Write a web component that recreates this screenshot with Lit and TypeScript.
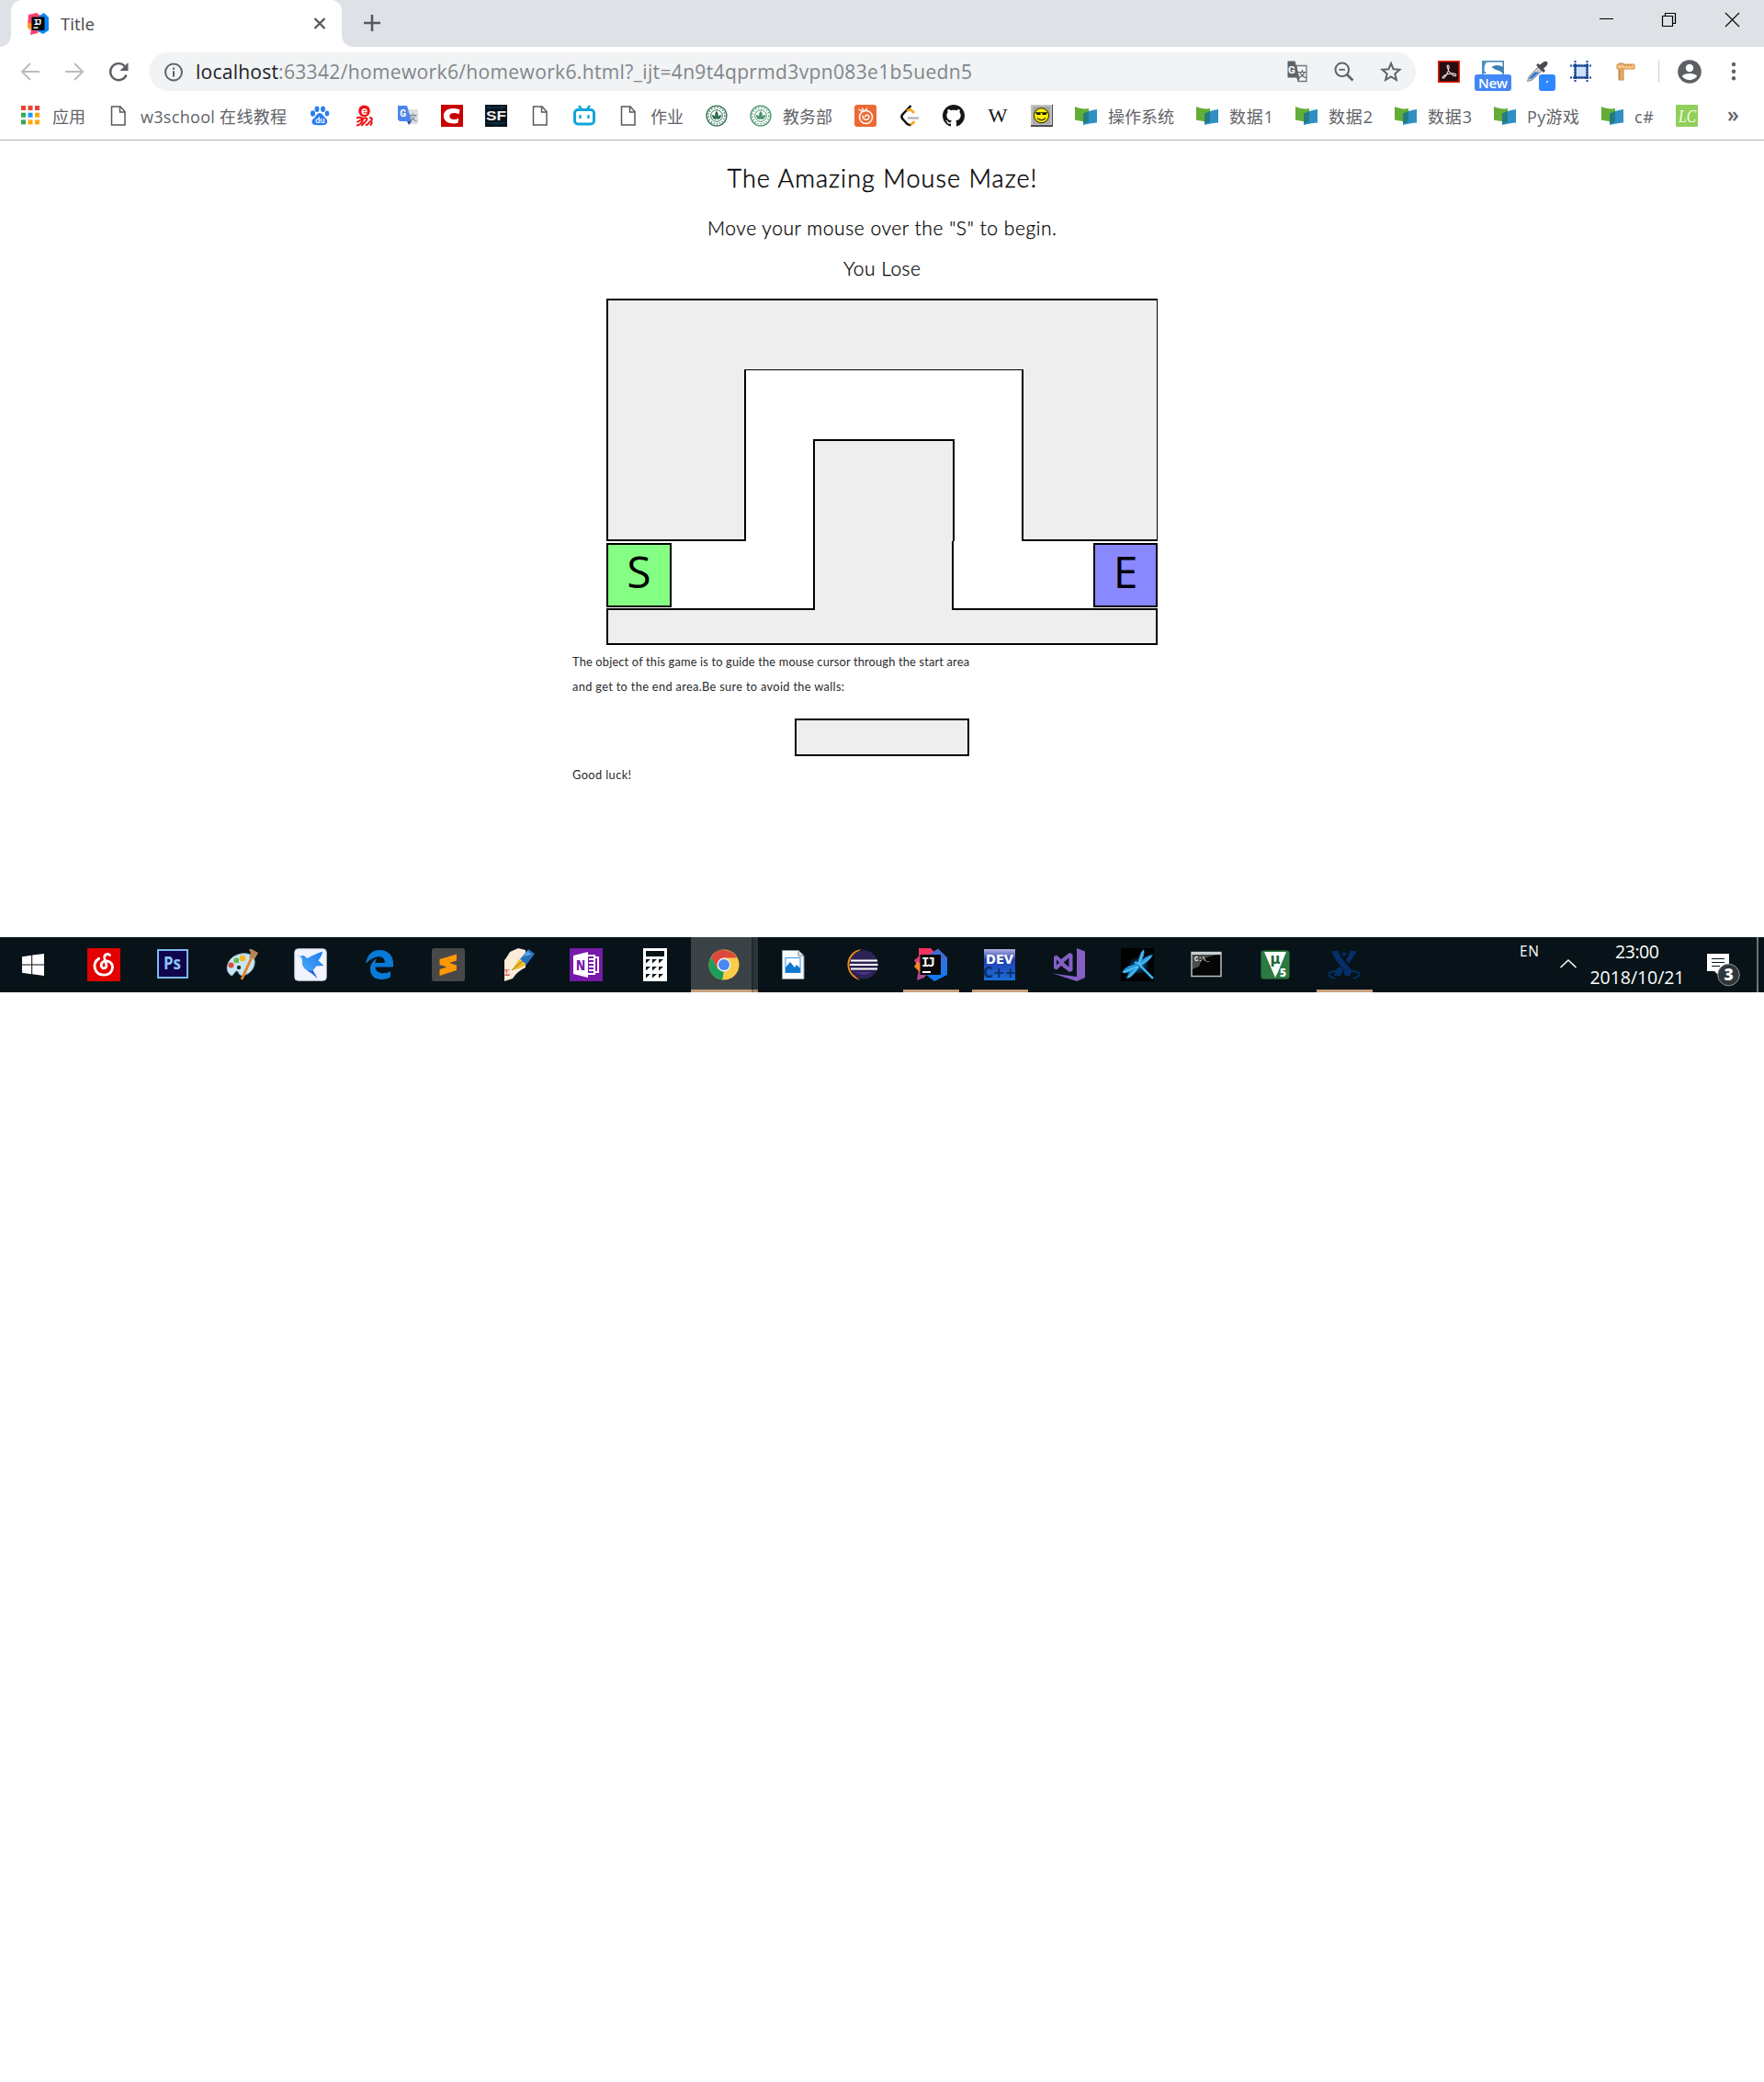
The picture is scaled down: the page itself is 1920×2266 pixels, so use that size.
import { LitElement, html, css, svg } from "lit";
import { customElement, property } from "lit/decorators.js";

/** A single line of text whose tracking is adjusted so it fills a given width. */
@customElement("fit-text")
class FitText extends LitElement {
  static styles = css`
    :host { display: block; white-space: pre; flex: none; }
    .run { display: inline-block; }
  `;
  @property({ type: Number }) w = 0;
  @property() text = "";
  firstUpdated() {
    const run = this.renderRoot.querySelector(".run") as HTMLElement;
    const natural = run.getBoundingClientRect().width;
    const n = Array.from(this.text).length;
    if (n > 1) run.style.letterSpacing = (this.w - natural) / (n - 1) + "px";
    this.style.width = this.w + "px";
  }
  render() { return html`<span class="run">${this.text}</span>`; }
}

const fit = (text: string, w: number, cls = "") => html`<fit-text class=${cls} .text=${text} .w=${w}></fit-text>`;
const ic = (size: number, body: unknown, cls = "") =>
  html`<svg class="ic ${cls}" width=${size} height=${size} viewBox="0 0 ${size} ${size}">${body}</svg>`;

/* ---------- 24px icons ---------- */
const ij24 = svg`
  <path d="M1 2 10 0l6 5-5 17-8 2 1-8-4-4z" fill="#f9426a"/><path d="M0 10l5 2-2 7-3-3z" fill="#fc9a22"/>
  <path d="M13 3l5-3 5 5v14l-6 4-6-3z" fill="#0a86fb"/>
  <rect x="4.500" y="4.500" width="14" height="14.500" fill="#070707"/>
  <text x="6.500" y="12.500" font-family="Liberation Mono" font-weight="700" font-size="9.500" textLength="9" fill="#fff">IJ</text><path d="M6.500 15.500h5v1.500h-5z" fill="#fff"/>`;
const closeX = svg`<path d="M6.500 6l11 11m0-11-11 11" stroke="#55585c" stroke-width="2.300"/>`;
const plus = svg`<path d="M12 3v18M3 12h18" stroke="#55595e" stroke-width="2.500"/>`;
const back = svg`<path d="M22 12H3.500M12 3l-9 9 9 9" fill="none" stroke="#bbbcbe" stroke-width="2"/>`;
const fwd = svg`<path d="M2 12h18.500M12 3l9 9-9 9" fill="none" stroke="#bbbcbe" stroke-width="2"/>`;
const reload = svg`<path d="M20.500 15.500A9 9 0 1 1 18.700 6" fill="none" stroke="#5b5e63" stroke-width="2.400"/><path d="M22.500 2v9h-9z" fill="#5b5e63"/>`;
const info = svg`<circle cx="12" cy="12.500" r="9" fill="none" stroke="#5f6368" stroke-width="2"/><path d="M12 11.300V17.500M12 7.500v2.200" stroke="#5f6368" stroke-width="2"/>`;
const gtr = svg`
  <path d="M11 5.500h11v17h-9z" fill="#f4f5f6" stroke="#75787c" stroke-width="1.300"/>
  <path d="M1.500.5h8l5 18H1.500z" fill="#5f6367"/>
  <text x="2" y="13.700" font-family="Roboto" font-weight="700" font-size="11.500" fill="#fff">G</text>
  <text x="12.500" y="18" font-family="Noto Sans CJK SC" font-size="9.500" font-weight="700" fill="#5f6367">文</text><path d="M11 18.500h4l-2 4z" fill="#5f6367"/>`;
const zoomOut = svg`<circle cx="9.800" cy="9.800" r="7.300" fill="none" stroke="#5f6368" stroke-width="2"/><path d="M15 15l6.500 6.500" stroke="#5f6368" stroke-width="2.600"/><path d="M6.500 9.800h6.500" stroke="#5f6368" stroke-width="1.800"/>`;
const star = svg`<path d="M12 3l2.600 6.200 6.900.6-5.200 4.500 1.600 6.700L12 17.400 6.100 21l1.600-6.700-5.200-4.500 6.900-.6z" fill="none" stroke="#5f6368" stroke-width="2"/>`;
const acrobat = svg`<rect x=".7" y=".7" width="22.600" height="22.600" fill="#250d10" stroke="#f42306" stroke-width="1.500"/>
  <path d="M10.800 5c2.300 0 1 5 0 7.500-1.200 3-3.800 7-5.300 6.500-2-1 3-4.500 8.500-5 5-.4 6.500 1 5.500 2.300-1.300 1.300-5-1.300-7-4.300C10.500 8.500 9.300 5 10.800 5z" fill="none" stroke="#e6d9d7" stroke-width="1.200"/>`;
const shot = svg`<rect x=".8" y=".8" width="22.400" height="16" fill="#fff" stroke="#478abb" stroke-width="1.600"/><path d="M0 0h7Q2 3 2.500 11L5 14H0z" fill="#4b91c3"/><path d="M10.500 7c4.500-3 9-2 12.500 0v7c-4-4-8-3-12.500-7z" fill="#3f80b1"/>`;
const dropper = svg`<path d="M1.500 22.500l1.500-5L13 7l4 4L7 21z" fill="#c9cccd" stroke="#8b8e90"/><path d="M3.500 20.500l1-3 5-5h5l-8 7z" fill="#3279dc"/><path d="M11 5l8 8 2-2-2-2.500Q24 5 23.500 2 21-1 17 3l-2 1.500-2-1.500z" fill="#4a4c4f"/>`;
const frame = svg`<rect x="6" y="6" width="12" height="12" fill="#cbe0fb"/><path d="M4 5.500h16M4 18.500h16M5.500 4v16M18.500 4v16" stroke="#174594" stroke-width="2"/><path d="M0 5.500h24M0 18.500h24M5.500 0v24M18.500 0v24" stroke="#174594" stroke-width="2" stroke-dasharray="2 1"/>`;
const ruler = svg`<path d="M5 3h5v18H5z" fill="#e9ae68" stroke="#c98441"/><path d="M3 4h19v5H3z" fill="#f4c286" stroke="#d2904c"/><path d="M12 4v2m3-2v2m3-2v2M5 12h2m-2 3h2m-2 3h2" stroke="#a76b2c"/>`;
const person = svg`<circle cx="13" cy="13" r="12.800" fill="#5c6065"/><circle cx="13" cy="9" r="4.200" fill="#fff"/><path d="M4.800 18c2-4 14.400-4 16.400 0-4 5.500-12.400 5.500-16.400 0z" fill="#fff"/>`;
const dots = svg`<circle cx="11" cy="4" r="2.200" fill="#5f6368"/><circle cx="11" cy="11.700" r="2.200" fill="#5f6368"/><circle cx="11" cy="19.300" r="2.200" fill="#5f6368"/>`;

const apps = svg`${["#ea4335", "#ea4335", "#ea4335", "#34a853", "#1a9bfc", "#fbaa05", "#34a853", "#fbaa05", "#fbaa05"].map(
  (c, i) => svg`<rect x=${2 + (i % 3) * 7.500} y=${1 + Math.floor(i / 3) * 7.700} width="5" height="5" fill=${c}/>`)}`;
const page = svg`<path d="M4.500 2h9.500l5 5.500v14.500H4.500zM13.500 2v6H19" fill="#fff" stroke="#58595b" stroke-width="1.500"/>`;
const baidu = svg`<g fill="#2b7cf0"><ellipse cx="4.500" cy="9.500" rx="2.500" ry="3.200"/><ellipse cx="9" cy="4.800" rx="2.400" ry="3.200"/><ellipse cx="15.500" cy="4.800" rx="2.400" ry="3.200"/><ellipse cx="20" cy="9.500" rx="2.300" ry="3"/><path d="M12 9c3 0 4 4 6.500 5.500 3 2.500 2 7.500-2 7.500-3 .4-6 .3-9 0C3 22 2 17 6 14.500 8 13 9 9 12 9z"/></g>
  <text x="7.300" y="20.300" font-family="Lato" font-weight="700" font-size="9" fill="#fff">du</text>`;
const erke = svg`<circle cx="12.500" cy="6.800" r="6.300" fill="#ee1111"/><text x="9.200" y="10.800" font-family="Lato" font-weight="900" font-size="12.500" fill="#fff">e</text>
  <path d="M4 14.500c3-1 6-1 6 .5s-2 2-5.500 4M4 22.500c4 0 6-3 7.500-7.500 3-1.500 5 0 3 2.500s-4 3-5 5.500M14 22.500c2-1 4-2 4-4M18 14c3 0 4 2 1.500 4 2 1 1 3-.5 4.500" fill="none" stroke="#ee1111" stroke-width="2"/>`;
const gt = svg`<path d="M11 5h12v16H13z" fill="#dcdee1"/><path d="M1 1h10l5 17H3l-2-2z" fill="#4b87ef"/><path d="M11 18h5l-3 4z" fill="#2850a7"/>
  <text x="3.300" y="13" font-family="Roboto" font-weight="700" font-size="10" fill="#fff">G</text><text x="13" y="17" font-family="Noto Sans CJK SC" font-size="9" fill="#60778a">文</text>`;
const cIcon = svg`<rect width="24" height="24" fill="#c90000"/><path d="M20.500 5.500C15 3 3 3 2.800 12.300 3 21 15 21.500 18.500 19.500l.8-5C15 17 9 16.500 9.300 12.300c.4-4 5.700-4 10.300-2z" fill="#fff"/>`;
const sf = svg`<rect width="24" height="24" fill="#07131c"/><path d="M1 3h22M2 20h20M5 1v4m7 14v4m6-22v4" stroke="#124058"/><text x="1" y="17" font-family="Liberation Sans" font-weight="700" font-size="15.500" textLength="22" lengthAdjust="spacingAndGlyphs" fill="#eee">SF</text>`;
const bili = svg`<rect x="1.500" y="5.500" width="21" height="15.500" rx="3.500" fill="none" stroke="#13a5da" stroke-width="3"/><path d="M6 1l3 4m9-4-3 4" stroke="#13a5da" stroke-width="2.500"/><path d="M7.500 11v4M16.500 11v4" stroke="#13a5da" stroke-width="2.300"/>`;
const seal = (c: string) => svg`<circle cx="12" cy="12" r="10.900" fill="#fff" stroke=${c} stroke-width="1.300"/><circle cx="12" cy="12" r="8.800" fill="none" stroke=${c} stroke-width="1.500" stroke-dasharray="1.200 2"/><circle cx="12" cy="12" r="6.300" fill="none" stroke=${c} stroke-width="1"/><path d="M12 7c2.500 2 2.500 6 0 9-2.500-3-2.500-7 0-9zM7 11q3.500 0 4.500 5-4.500 0-4.500-5zm10 0q-3.500 0-4.500 5 4.500 0 4.500-5z" fill=${c}/>`;
const onion = svg`<rect width="24" height="24" rx="3" fill="#ed6a35"/><circle cx="12.500" cy="13.500" r="7" fill="none" stroke="#fff" stroke-width="1.500"/><path d="M9 7.500 4.500 5M9.500 7 8.500 3.500M10.500 7 14 4M9 11.500c0 6 6.500 6 7 2 0-3.500-4.500-2.500-4.500 0" fill="none" stroke="#fff" stroke-width="1.400"/>`;
const leet = svg`<path d="M13.500 1 4 11q-1.500 2.500.5 4.500L9.500 21q2.500 1.500 4 .5" fill="none" stroke="#111" stroke-width="2.500"/><path d="M9 7q3-3 5.500-.5l2.500 2.500M13 22l4.500-3.800" fill="none" stroke="#ffa116" stroke-width="2.500"/><path d="M10 14.500h12" stroke="#b1b1b1" stroke-width="2.300"/>`;
const github = svg`<path transform="scale(1.500)" d="M8 0C3.580 0 0 3.580 0 8c0 3.540 2.290 6.530 5.470 7.590.4.070.55-.17.55-.38 0-.19-.01-.82-.01-1.490-2.010.37-2.530-.49-2.690-.94-.09-.23-.48-.94-.82-1.130-.28-.15-.68-.52-.01-.53.63-.01 1.080.58 1.230.82.72 1.210 1.870.87 2.330.66.07-.52.28-.87.51-1.070-1.780-.2-3.640-.89-3.640-3.950 0-.87.31-1.590.82-2.150-.08-.2-.36-1.020.08-2.120 0 0 .67-.21 2.200.82.64-.18 1.320-.27 2-.27s1.360.09 2 .27c1.530-1.040 2.200-.82 2.200-.82.44 1.100.16 1.920.08 2.120.51.56.82 1.270.82 2.150 0 3.070-1.870 3.750-3.650 3.950.29.25.54.73.54 1.480 0 1.070-.01 1.930-.01 2.200 0 .21.15.46.55.38A8.010 8.010 0 0 0 16 8c0-4.420-3.580-8-8-8z" fill="#161616"/>`;
const wiki = svg`<text x="1.500" y="19" font-family="Liberation Serif" font-size="21" textLength="21" lengthAdjust="spacingAndGlyphs" fill="#111">W</text>`;
const smile = svg`<rect width="24" height="24" fill="#4c4c4c"/><path d="M0 0h23v22H0z" fill="#c2c2c2"/><rect x="2" y="2" width="19" height="19" fill="#a7a7a7"/><circle cx="11.500" cy="11.700" r="8" fill="#ffef00" stroke="#221f00" stroke-width="1"/><path d="M5.500 8.500h5v2.500h-4zM12.500 8.500h5l-1 2.500h-4zM4.500 8.200h14v.8h-14z" fill="#141400"/><path d="M7 14.500q4.500 4.500 9 0" fill="none" stroke="#332" stroke-width="1.300"/>`;
const folder = svg`<path d="M0 2c4 2 11 3 15 2v14H8.500C5 17.500 2.500 17 0 16.500z" fill="#63ad37"/><path d="M9 9.500 15 7v12.500l-6 1.500z" fill="#237c84"/><path d="M15 7q5-1.500 9-2v14.500q-5 .3-9 1.200l-6 1.300v-1.500l6-1.500z" fill="#3090c4"/>`;
const lc = svg`<rect width="24" height="24" rx="1" fill="#91cf5b"/><text x="3" y="19" font-family="Liberation Serif" font-style="italic" font-size="19" textLength="19" lengthAdjust="spacingAndGlyphs" fill="#f7fff1">LC</text>`;

/* ---------- 36px taskbar icons ---------- */
const win = svg`<path d="M6 9.300 16.200 7.800v9.700H6zM17.200 7.600 30 6v11.500H17.200zM6 18.500h10.200v9.700L6 26.700zM17.200 18.500H30V30l-12.800-1.700z" fill="#fff"/>`;
const netease = svg`<rect width="36" height="36" fill="#e30000"/><path d="M24.500 7.500c-3-2.500-6.500 0-5.700 3.500l2 7.500c.7 4-5.500 4.500-5.700.4-.2-5 5.500-6.200 9.200-3.900 6 4 3 14-6 14.200C7.500 29.300 4.500 16.500 12.700 11.200" fill="none" stroke="#fff" stroke-width="2.800" stroke-linecap="round"/>`;
const ps = svg`<rect x="2" y="2" width="32" height="30" fill="#10054c" stroke="#7db7f1" stroke-width="2"/><text x="8" y="23" font-family="Open Sans" font-weight="700" font-size="19" textLength="19" lengthAdjust="spacingAndGlyphs" fill="#8bc5fa">Ps</text>`;
const paint = svg`<path d="M7 30C-1 25 2 15 8 10c7-5 17-6 22-1 5 6 1 17-8 20-4 2-7 0-8-4-4-1-3 3-7 5z" fill="#c9e6f3" stroke="#86afc2"/><circle cx="6.500" cy="18.500" r="3" fill="#e24b3d"/><rect x="9.500" y="10.500" width="5.500" height="5.500" rx="1.500" fill="#66b94c"/><circle cx="19" cy="11" r="3.300" fill="#f5b524"/><circle cx="15" cy="21" r="2.200" fill="#17323d"/><path d="M29 10 18 34" stroke="#e2832c" stroke-width="3"/><path d="M26 10l6 2 4-7-7-4-3 0 2 5z" fill="#b1855b"/>`;
const bird = svg`<defs><linearGradient id="w" x1="1" x2="0" y2="1"><stop stop-color="#1f7bf0"/><stop offset="1" stop-color="#55b4fb"/></linearGradient></defs>
  <rect x=".8" y=".8" width="34.400" height="34.400" rx="3.500" fill="#f1f4fd" stroke="#d3daeb"/>
  <path d="M2.500 7.500 7.500 9Q10 6.500 12.500 9.500q1.500 2 4 .5Q22 6.500 31.500 3.500 30 9 26.500 13.500l6 5.500-8.500.5q-1.500 3.500-3.500 4.500l5 9Q20 27 14 24 7.500 20 9 13q-.5-2.500-2-3.500z" fill="url(#w)"/><path d="M14 24q4.500 1.500 6.500 0l5 9Q20 27 14 24z" fill="#2c5dd6"/>`;
const edge = svg`<path d="M3.200 16.800C4.500 6.500 11 2 18 2c10 0 15.500 7 15 15.500v3H13.500c.5 8 11 8 16.500 4.500v6.500C21 36.500 7.500 34.500 8 22c.2-5 3-8.500 7-10.500-1 1.500-1.600 3-1.700 4.500h10.500c.2-7-6-7.500-10.500-6-4 1.200-7.500 3.800-10.100 6.800z" fill="#0a7ad8"/>`;
const sublime = svg`<rect width="36" height="36" rx="2.500" fill="#484848"/><path d="M8.500 12 27 6.500v7L19 16l8 2.500v5.500L8.500 30v-7l8-2.500-8-2.500z" fill="#ff9800"/>`;
const note = svg`<path d="M4 36V13q2-2 6-9l9-4 8 2v19q-9 4-14 12z" fill="#faecd9"/><text x="4" y="30" font-family="Liberation Serif" font-weight="700" font-size="9.500" fill="#df606b">Σ</text><path d="M12 24 20 12l8 6-8 4z" fill="#eebb29"/><path d="M12 24 26 12" stroke="#9e7a1b"/><path d="M21 12 30 1l7 5-9 12z" fill="#2871bd"/><path d="M24 9l5-6 5 4" fill="#5ba2df"/>`;
const onenote = svg`<rect width="36" height="36" fill="#7719aa"/><path d="M20 8h7v20h-7" fill="#7719aa" stroke="#fff" stroke-width="2"/><path d="M28 10h3v16h-3M21 12h5m-5 4h5m-5 4h5m-5 4h5" fill="none" stroke="#fff" stroke-width="2"/><path d="M4 8 20 4v28L4 28z" fill="#fff"/><text x="7" y="24" font-family="Open Sans" font-weight="800" font-size="16" textLength="10" lengthAdjust="spacingAndGlyphs" fill="#7719aa">N</text>`;
const calc = svg`<rect x="5" width="26" height="36" fill="#fff"/><rect x="8" y="3" width="20" height="6" fill="#071318"/>${[12, 20, 28].map((y) =>
  [8, 15, 22].map((x) => svg`<path d="M${x} ${y}h5l-5 4.500z" fill="#071318"/>`))}`;
const chrome = svg`<circle cx="18" cy="18" r="16.500" fill="#fbcc47"/><path d="M3.700 9.800A16.500 16.500 0 0 1 32.300 10.500H18L10.500 21.500z" fill="#db4a3d"/><path d="M3.700 9.700 10.800 21.800 18 26l-1.800 8.400A16.500 16.500 0 0 1 3.700 9.700z" fill="#1b9e5a"/><path d="M18 25.500 25 21l-8.500 13.400z" fill="#fbcc47"/><circle cx="18" cy="18" r="7.500" fill="#f2f2f2"/><circle cx="18" cy="18" r="6" fill="#4a87ee"/>`;
const picture = svg`<path d="M6.500 2.500H24l6 6V33.500H6.500z" fill="#f9fbfc" stroke="#8a969c"/><path d="M24 2.500v6h6" fill="#dbe0e3" stroke="#8a969c"/><rect x="10" y="10.500" width="16" height="16" fill="#fff" stroke="#3a92dd"/><path d="M10 26.500V21l5-6 5 6 2-3 4 4v4.500z" fill="#0f75d0"/>`;
const eclipse = svg`<path d="M18 1C-2 3-3 31 17 35 4 29 4 8 18 1z" fill="#f18d15"/><circle cx="20" cy="18" r="15.700" fill="#2d2254"/><path d="M6 13.500h29M5 18h30.500M6 22.500h29" stroke="#fff" stroke-width="2"/><path d="M11 26h18q-9 6-18 0z" fill="#49358b"/>`;
const ij = svg`<defs><linearGradient id="p" x2="0" y2="1"><stop stop-color="#fe315d"/><stop offset="1" stop-color="#a14c9b"/></linearGradient><linearGradient id="b" x2="0" y2="1"><stop stop-color="#4f68ca"/><stop offset="1" stop-color="#087cfa"/></linearGradient></defs>
  <path d="M5 0h13l9 10-16 22-8 3 2-13-5-9 5-4z" fill="url(#p)"/><path d="M0 20l4-6 5 7-3 5z" fill="#f58529"/><path d="M16 7 26 .5 36 10v19l-14 7-9-7z" fill="url(#b)"/><rect x="6.500" y="7" width="22.500" height="22" fill="#080808"/><text x="8" y="19.500" font-family="DejaVu Sans Mono" font-weight="700" font-size="14" textLength="15" fill="#fff">IJ</text><path d="M9 25h9v2H9z" fill="#fff"/>`;
const dev = svg`<defs><linearGradient id="d" x2="0" y2="1"><stop stop-color="#aeb3df"/><stop offset=".35" stop-color="#233fb2"/><stop offset="1" stop-color="#1b70d8"/></linearGradient></defs><rect x="1" y="1" width="34" height="34" fill="url(#d)"/><text x="0" y="32" font-family="DejaVu Sans" font-weight="700" font-size="16" textLength="36" lengthAdjust="spacingAndGlyphs" fill="#073369">C++</text><text x="3" y="17" font-family="DejaVu Sans" font-weight="700" font-size="14.500" textLength="30" lengthAdjust="spacingAndGlyphs" fill="#fff">DEV</text>`;
const vs = svg`<path d="M27 0 36 3.500V32l-9 4-26-8.500L27 31zM2 9l3-1.500L10 12l9-7 3.500 1.500v18L19 26l-9-7-5 4.500L2 22zm3 3.500v6l3-3zM12.500 15.500l6 5v-10z" fill="#865fc5" fill-rule="evenodd"/>`;
const fly = svg`<defs><radialGradient id="f"><stop stop-color="#126fae"/><stop offset="1" stop-color="#000"/></radialGradient></defs><rect width="36" height="36" fill="#000"/><ellipse cx="19" cy="19" rx="12" ry="10" fill="url(#f)"/>
  <g fill="#2299dd"><path d="M18 18Q20 5 25 1q2 5-4 17zM19 18Q27 7 35 7q-3 7-14 13zM19 17Q6 18 1 26q4 4 17-5zM18 19Q8 25 6 33q5 1 14-12z"/></g>
  <path d="M15 16q4-1 7 4l13 13" fill="none" stroke="#3db4ef" stroke-width="2.500"/><path d="M24 3 20 17M33 9 21 18M3 26l15-6M8 32l11-12" stroke="#7fd2f7" stroke-width="1"/>`;
const cmd = svg`<rect x="2" y="4.500" width="32" height="26" fill="#050505" stroke="#b9c1c5" stroke-width="1.500"/><path d="M2 4h32v3H2z" fill="#c9d0d4"/><path d="M3 7h30q-20 1-23 13l-7 3z" fill="#4b4b4b"/><text x="5" y="13.500" font-family="Liberation Mono" font-weight="700" font-size="7" fill="#fff">C:\\_</text>`;
const keil = svg`<rect x="2.500" y="2.500" width="31" height="31" rx="3" fill="#2b7a42" stroke="#1b512b"/><path d="M6 4h24l-9 22-3 6z" fill="#fff"/><text x="12.500" y="16.500" font-family="DejaVu Sans" font-weight="700" font-size="15" fill="#1e6734">µ</text><text x="23" y="30.500" font-family="Open Sans" font-weight="800" font-size="12" fill="#fff">5</text>`;
const xcross = svg`<g fill="#042f6b"><path d="M4 3l7 0 5 9 11 13-3 5H19l-2-5 1-1L9 13zM32 3l-7 0-5 10 3 4z"/><path d="M15 5h6l-3 4zM13 20l4 3-3 7H7l2-6z"/></g><path d="M10 25C0 25-2 31 8 33M26 25c10 0 12 5 2 8" fill="none" stroke="#042f6b" stroke-width="2"/>`;

type Task = { icon: unknown; state?: string };
const tasks: Task[] = [
  { icon: win, state: "start" }, { icon: netease }, { icon: ps }, { icon: paint }, { icon: bird }, { icon: edge }, { icon: sublime }, { icon: note },
  { icon: onenote }, { icon: calc }, { icon: chrome, state: "active" }, { icon: picture }, { icon: eclipse }, { icon: ij, state: "open" },
  { icon: dev, state: "open" }, { icon: vs }, { icon: fly }, { icon: cmd }, { icon: keil }, { icon: xcross, state: "open" },
];

const marks: [unknown, string?, number?][] = [
  [apps, "应用", 36], [page, "w3school 在线教程", 159], [baidu], [erke], [gt], [cIcon], [sf], [page], [bili], [page, "作业", 36],
  [seal("#2e6e50")], [seal("#469168"), "教务部", 54], [onion], [leet], [github], [wiki], [smile],
  [folder, "操作系统", 72], [folder, "数据1", 48], [folder, "数据2", 48], [folder, "数据3", 48], [folder, "Py游戏", 57], [folder, "c#", 21], [lc],
];

@customElement("app-root")
class AppRoot extends LitElement {
  static styles = css`
    :host { display: block; width: 1920px; height: 2266px; background: #fff; overflow: hidden; font-family: "Open Sans", "Noto Sans CJK SC", sans-serif; color: #000; }
    * { box-sizing: border-box; }
    .ic { display: block; flex: none; overflow: visible; }
    .strip { height: 51px; background: #dee1e6; display: flex; padding-left: 12px; }
    .tab { position: relative; width: 360px; height: 51px; background: #fff; border-radius: 12px 12px 0 0; display: flex; align-items: center; padding: 0 12px 0 18px; }
    .tab::before, .tab::after { content: ""; position: absolute; bottom: 0; width: 12px; height: 12px; }
    .tab::before { left: -12px; background: radial-gradient(circle at 0 0, transparent 11.500px, #fff 12px); }
    .tab::after { right: -12px; background: radial-gradient(circle at 100% 0, transparent 11.500px, #fff 12px); }
    .title { font-size: 18.500px; line-height: 26px; color: #45484c; margin-left: 12px; flex: 1; }
    .add { margin: 13px 0 0 21px; }
    .controls { margin-left: auto; display: flex; gap: 44px; padding: 9px 23px 0 0; }
    .bar { height: 54px; display: flex; align-items: center; padding-left: 21px; }
    .nav { display: flex; gap: 24px; }
    .omni { width: 1379px; height: 42px; margin-left: 21px; border-radius: 21px; background: #f1f3f4; display: flex; align-items: center; padding: 0 15px 0 15px; }
    .url { font-size: 21px; line-height: 30px; display: flex; margin-left: 12px; flex: 1; color: #80868b; }
    .host { color: #202124; }
    .tools { display: flex; gap: 27px; }
    .ext { display: flex; margin-left: 24px; gap: 24px; align-items: center; }
    .badged { position: relative; }
    .badge { position: absolute; top: 15px; left: -8px; width: 40px; height: 18px; border-radius: 3px; background: #4386f6; color: #fff; font-size: 15px; line-height: 18px; font-weight: 600; display: flex; justify-content: center; }
    .dot { left: 14px; width: 18px; background: #2e87ff; font-size: 12px; }
    .sep { width: 1px; height: 24px; background: #c9cbce; margin: 0 -4px 0 0; }
    .marks { height: 48px; border-bottom: 1px solid #b3b4b6; display: flex; gap: 24px; padding: 9px 0 0 21px; }
    .mark { display: flex; gap: 12px; height: 24px; align-items: center; }
    .label { font-size: 18px; line-height: 24px; color: #5f6368; font-family: "Open Sans", "Noto Sans CJK SC", sans-serif; font-weight: 400; padding-top: 1px; }
    .more { font-size: 23px; line-height: 20px; color: #5f6368; margin-left: 8px; font-weight: 600; }
    .view { height: 867px; display: flex; flex-direction: column; font-family: "Lato", sans-serif; font-weight: 400; color: #000; }
    .center { display: flex; justify-content: center; }
    .h { font-size: 27px; line-height: 36px; margin-top: 23px; font-weight: 300; -webkit-text-stroke: 0.4px #000; }
    .p { font-size: 21px; line-height: 30px; margin-top: 21px; font-weight: 300; -webkit-text-stroke: 0.250px #000; }
    .p2 { margin-top: 14px; }
    .maze { display: block; flex: none; margin: 18px 0 0 660px; }
    .rules { padding-left: 623px; font-size: 12.800px; line-height: 18px; font-weight: 400; color: #2a2a2a; padding-top: 9px; }
    .l2 { margin-top: 9px; }
    .wall { width: 190px; height: 41px; border: 2px solid #000; background: #eee; margin: 26px 0 11px 242px; }
    .task { height: 60px; background: #071318; display: flex; }
    .cell { width: 75px; height: 60px; display: flex; align-items: center; justify-content: center; position: relative; flex: none; }
    .cell.start { padding: 0 3px 0 0; }
    .cell.open::after { content: ""; position: absolute; left: 8px; width: 61px; bottom: 0; height: 3px; background: #c9a27c; }
    .cell.active { background: linear-gradient(90deg, transparent 2px, #3b4245 2px 68px, #20282b 68px 70px, #2c3437 70px); }
    .cell.active::after { content: ""; position: absolute; left: 2px; right: 0; bottom: 0; height: 3px; background: linear-gradient(90deg, #c9a27c 66px, #8b745e 66px 68px, #a98a6c 68px); }
    .tray { margin-left: auto; display: flex; color: #fff; }
    .en { font-size: 15.500px; line-height: 20px; margin-top: 5px; }
    .caret { margin: 19px 0 0 20px; }
    .clock { width: 104px; margin: 2px 0 0 11px; font-size: 19.500px; line-height: 28px; display: flex; flex-direction: column; align-items: center; }
    .bell { margin: 16px 0 0 24px; }
    .edge { width: 2px; background: #6c7477; margin: 0 6px 0 16px; }
  `;
  render() {
    return html`
      <div class="strip">
        <div class="tab">${ic(24, ij24)}<div class="title">${fit("Title", 37)}</div>${ic(24, closeX)}</div>
        ${ic(24, plus, "add")}
        <div class="controls">
          ${ic(24, svg`<path d="M4 11.500h15" stroke="#000" stroke-width="1"/>`)}
          ${ic(24, svg`<path d="M4.500 8.500h11v11h-11zM7.500 8.500v-3h11v11h-3" fill="none" stroke="#000" stroke-width="1.200"/>`)}
          ${ic(24, svg`<path d="M5 5l15 15M20 5 5 20" stroke="#111" stroke-width="1.300"/>`)}
        </div>
      </div>
      <div class="bar">
        <div class="nav">${ic(24, back)}${ic(24, fwd)}${ic(24, reload)}</div>
        <div class="omni">
          ${ic(24, info)}
          <div class="url">${fit("localhost", 90, "host")}${fit(":63342/homework6/homework6.html?_ijt=4n9t4qprmd3vpn083e1b5uedn5", 755)}</div>
          <div class="tools">${ic(24, gtr)}${ic(24, zoomOut)}${ic(24, star)}</div>
        </div>
        <div class="ext">
          ${ic(24, acrobat)}
          <div class="badged">${ic(24, shot)}<div class="badge">${fit("New", 32)}</div></div>
          <div class="badged">${ic(24, dropper)}<div class="badge dot">·</div></div>
          ${ic(24, frame)}${ic(24, ruler)}
          <div class="sep"></div>${ic(26, person)}${ic(24, dots)}
        </div>
      </div>
      <div class="marks">
        ${marks.map(([i, t, w]) => html`<div class="mark">${ic(24, i)}${t ? fit(t, w!, "label") : ""}</div>`)}
        <div class="more">»</div>
      </div>
      <div class="view">
        <div class="center h">${fit("The Amazing Mouse Maze!", 337)}</div>
        <div class="center p">${fit('Move your mouse over the "S" to begin.', 380)}</div>
        <div class="center p p2">${fit("You Lose", 84)}</div>
        <svg class="maze" width="600" height="377" viewBox="0 0 600 377" shape-rendering="crispEdges">
          <path d="M0 0H600V264H452V77H152V264H0z" fill="#000"/>
          <path d="M2 2H599V262H454V77H150V262H2z" fill="#eee"/>
          <path d="M150 77H454V264H452V78H152V264H150z" fill="#000"/>
          <path d="M0 337H225V153H379V264H378V337H600V377H0z" fill="#000"/>
          <path d="M2 339H227V155H377V264H376V339H598V375H2z" fill="#eee"/>
          <path d="M1 267h69v68H1z" fill="#84ff84" stroke="#000" stroke-width="2"/>
          <path d="M531 267h68v68h-68z" fill="#8888ff" stroke="#000" stroke-width="2"/>
          <g font-family="Open Sans" font-weight="400" font-size="48" text-anchor="middle"><text x="35.500" y="315">S</text><text x="565" y="315">E</text></g>
        </svg>
        <div class="rules">
          ${fit("The object of this game is to guide the mouse cursor through the start area", 432)}
          ${fit("and get to the end area.Be sure to avoid the walls:", 296, "l2")}
          <div class="wall"></div>
          ${fit("Good luck!", 64)}
        </div>
      </div>
      <div class="task">
        ${tasks.map((t) => html`<div class="cell ${t.state ?? ""}">${ic(36, t.icon)}</div>`)}
        <div class="tray">
          <div class="en">${fit("EN", 21)}</div>
          ${ic(24, svg`<path d="M3.500 14 12 6l8.500 8" fill="none" stroke="#fff" stroke-width="1.500"/>`, "caret")}
          <div class="clock">${fit("23:00", 48)}${fit("2018/10/21", 103)}</div>
          ${ic(38, svg`<path d="M0 2h24v19H13v5l-5-5H0z" fill="#fff"/><path d="M5 7.500h14M5 11.500h14M5 15.500h9" stroke="#071318" stroke-width="1.200"/><circle cx="23.500" cy="25" r="11.800" fill="#303639" stroke="#91979a" stroke-width="1"/><text x="18.500" y="31" font-family="Open Sans" font-size="17.500" font-weight="800" fill="#fff">3</text>`, "bell")}
          <div class="edge"></div>
        </div>
      </div>`;
  }
}
